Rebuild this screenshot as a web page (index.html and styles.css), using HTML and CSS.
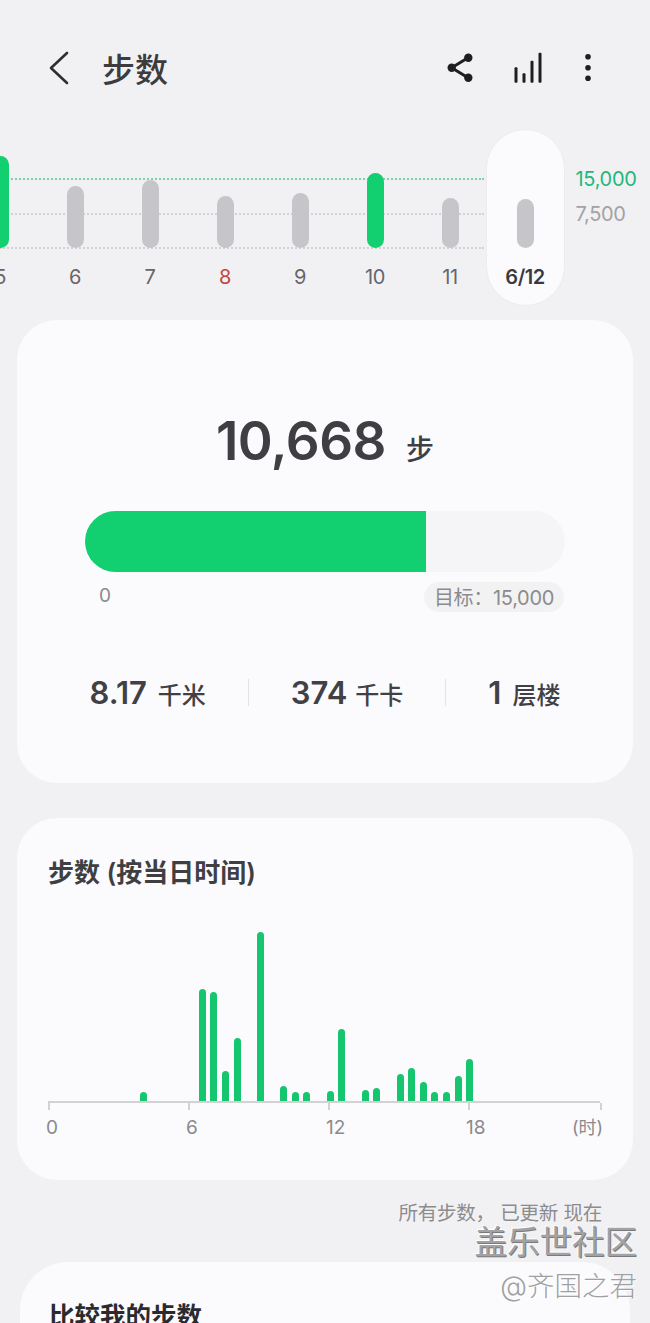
FILE: index.html
```html
<!DOCTYPE html>
<html lang="zh-CN">
<head>
<meta charset="utf-8">
<title>步数</title>
<link rel="stylesheet" href="styles.css">
</head>
<body>
<div class="page">
  <header class="topbar">
    <svg class="back" width="24" height="36" viewBox="0 0 24 36"><path d="M19 3 L3 18 L19 33" /></svg>
    <h1 class="title">步数</h1>
    <div class="actions">
      <svg class="ico" width="30" height="34" viewBox="0 0 30 34"><path class="share-line" d="M21 6.7 L4.7 16.7 L21 26.7"/><circle cx="4.7" cy="16.7" r="4.2"/><circle cx="21.3" cy="6.7" r="4.2"/><circle cx="21.3" cy="26.7" r="4.2"/></svg>
      <svg class="ico" width="30" height="34" viewBox="0 0 30 34"><rect x="1.5" y="16.3" width="3" height="15.4" rx="1"/><rect x="9.5" y="22.3" width="3" height="9.4" rx="1"/><rect x="17.5" y="9.7" width="3" height="22" rx="1"/><rect x="25.5" y="1.7" width="3" height="30" rx="1"/></svg>
      <svg class="ico" width="8" height="34" viewBox="0 0 8 34"><circle cx="4" cy="5.7" r="2.8"/><circle cx="4" cy="16.7" r="2.8"/><circle cx="4" cy="27.3" r="2.8"/></svg>
    </div>
  </header>

  <section class="trend">
    <div class="gridlines">
      <div class="gridline goal"></div>
      <div class="gridline"></div>
      <div class="gridline"></div>
    </div>
    <div class="days">
      <div class="day"><div class="plot"><div class="bar on" style="height:92px"></div></div><span class="day-label">5</span></div>
      <div class="day"><div class="plot"><div class="bar" style="height:62px"></div></div><span class="day-label">6</span></div>
      <div class="day"><div class="plot"><div class="bar" style="height:68px"></div></div><span class="day-label">7</span></div>
      <div class="day"><div class="plot"><div class="bar" style="height:52px"></div></div><span class="day-label sun">8</span></div>
      <div class="day"><div class="plot"><div class="bar" style="height:55px"></div></div><span class="day-label">9</span></div>
      <div class="day"><div class="plot"><div class="bar on" style="height:75px"></div></div><span class="day-label">10</span></div>
      <div class="day"><div class="plot"><div class="bar" style="height:50px"></div></div><span class="day-label">11</span></div>
      <div class="day today"><div class="plot"><div class="bar" style="height:49px"></div></div><span class="day-label">6/12</span></div>
    </div>
    <div class="scale">
      <span class="scale-goal">15,000</span>
      <span class="scale-mid">7,500</span>
    </div>
  </section>

  <section class="card summary">
    <div class="total"><span class="total-num">10,668</span><span class="total-unit">步</span></div>
    <div class="progress"><div class="progress-fill" style="width:341px"></div></div>
    <div class="progress-notes">
      <span class="zero">0</span>
      <span class="goal-pill">目标：15,000</span>
    </div>
    <div class="stats">
      <div class="stat"><b>8.17</b><span>千米</span></div>
      <i class="divider"></i>
      <div class="stat mid"><b>374</b><span>千卡</span></div>
      <i class="divider"></i>
      <div class="stat"><b>1</b><span>层楼</span></div>
    </div>
  </section>

  <section class="card hourly">
    <h2 class="card-title">步数 (按当日时间)</h2>
    <div class="hours">
      <i></i><i></i><i></i><i></i><i></i><i></i><i></i><i></i>
      <i style="height:9px"></i>
      <i></i><i></i><i></i><i></i>
      <i style="height:112px"></i><i style="height:109px"></i><i style="height:30px"></i><i style="height:63px"></i>
      <i></i>
      <i style="height:169px"></i>
      <i></i>
      <i style="height:15px"></i><i style="height:9px"></i><i style="height:9px"></i>
      <i></i>
      <i style="height:10px"></i><i style="height:72px"></i>
      <i></i>
      <i style="height:11px"></i><i style="height:13px"></i>
      <i></i>
      <i style="height:27px"></i><i style="height:33px"></i><i style="height:19px"></i><i style="height:9px"></i><i style="height:9px"></i><i style="height:25px"></i><i style="height:42px"></i>
      <i></i><i></i><i></i><i></i><i></i><i></i><i></i><i></i><i></i><i></i><i></i>
    </div>
    <div class="axis">
      <span class="tick"></span><span class="tick"></span><span class="tick"></span><span class="tick"></span><span class="tick last"></span>
    </div>
    <div class="axis-labels">
      <span>0</span><span>6</span><span>12</span><span>18</span><span class="unit">(时)</span>
    </div>
  </section>

  <p class="updated">所有步数， 已更新 现在</p>

  <section class="card compare">
    <h2 class="card-title dark">比较我的步数</h2>
  </section>

  <div class="watermark">
    <div class="wm-main">盖乐世社区</div>
    <div class="wm-sub">@齐国之君</div>
  </div>
</div>
</body>
</html>
```

FILE: styles.css
```css
* { box-sizing: border-box; }
html, body { margin: 0; padding: 0; }
body {
  background: #f1f1f4;
  font-family: Inter, "Noto Sans CJK SC", sans-serif;
  color: #3a3a3d;
}
.page {
  position: relative;
  width: 650px;
  height: 1323px;
  overflow: hidden;
}

/* Header */
.topbar {
  display: flex;
  align-items: center;
  height: 34px;
  margin-top: 51px;
  padding: 0 0 0 48px;
}
.back { fill: none; stroke: #2f2f31; stroke-width: 2.6; flex: none; }
.back path { stroke-linecap: round; stroke-linejoin: round; }
.title {
  margin: 4px 0 0 30px;
  font-size: 33px;
  font-weight: 500;
  line-height: 34px;
  color: #3c3c3e;
}
.actions {
  display: flex;
  align-items: center;
  margin-left: auto;
  margin-right: 58px;
  gap: 36px;
}
.ico { fill: #1f1f21; flex: none; display: block; }
.actions .ico:nth-child(1) { margin-right: 0; }
.actions .ico:nth-child(2) { margin-right: 5px; }
.share-line { fill: none; stroke: #1f1f21; stroke-width: 3; }

/* Daily trend */
.trend {
  position: relative;
  display: flex;
  height: 177px;
  margin-top: 44px;
}
.gridlines {
  position: absolute;
  left: 0;
  top: 49px;
  width: 484px;
  height: 71px;
  display: flex;
  flex-direction: column;
  justify-content: space-between;
}
.gridline { border-top: 2px dotted #d2d2d6; height: 0; }
.gridline.goal { border-top-color: #7fd0a6; }
.days {
  position: relative;
  display: flex;
  margin-left: -37.5px;
  flex: none;
}
.day {
  width: 75px;
  display: flex;
  flex-direction: column;
  align-items: center;
}
.plot {
  height: 119px;
  display: flex;
  align-items: flex-end;
}
.bar {
  width: 17px;
  border-radius: 9px;
  background: #c6c6ca;
}
.bar.on { background: #12cf6f; }
.day-label {
  margin-top: 17px;
  font-size: 20px;
  line-height: 24px;
  color: #66666a;
  letter-spacing: -0.5px;
}
.day-label.sun { color: #c2483f; }
.today {
  width: 79px;
  margin-left: -2px;
  background: #fbfbfd;
  border: 1px solid #ececef;
  border-radius: 40px;
}
.today .plot { height: 118px; }
.today .day-label { color: #3a3a3d; font-weight: 600; }
.scale {
  display: flex;
  flex-direction: column;
  margin-left: 11px;
  padding-top: 38px;
  font-size: 20px;
  line-height: 24px;
  letter-spacing: -0.3px;
  gap: 11px;
}
.scale-goal { color: #1eb87b; }
.scale-mid { color: #a2a2a5; }

/* Cards */
.card {
  background: #fbfbfd;
  border-radius: 40px;
  margin: 0 17px;
}
.summary {
  height: 463px;
  margin-top: 14px;
  padding: 84px 68px 0;
}
.total {
  display: flex;
  align-items: baseline;
  justify-content: center;
  gap: 20px;
  height: 74px;
}
.total-num {
  font-size: 53px;
  font-weight: 600;
  line-height: 74px;
  letter-spacing: -0.5px;
  color: #3f3f43;
}
.total-unit { font-size: 28px; font-weight: 500; color: #3f3f43; }
.progress {
  height: 61px;
  margin-top: 33px;
  border-radius: 31px;
  background: #f5f5f7;
  overflow: hidden;
}
.progress-fill { height: 100%; background: #12cf6f; }
.progress-notes {
  display: flex;
  justify-content: space-between;
  align-items: flex-start;
  margin-top: 10px;
}
.zero {
  margin: 2px 0 0 14px;
  font-size: 19px;
  line-height: 24px;
  color: #8a8a8d;
}
.goal-pill {
  width: 140px;
  height: 30px;
  margin-right: 1px;
  border-radius: 15px;
  background: #f2f2f3;
  font-size: 20px;
  line-height: 32px;
  text-align: center;
  color: #8b8b8e;
  letter-spacing: -0.3px;
  white-space: nowrap;
}
.stats {
  display: flex;
  align-items: center;
  justify-content: center;
  gap: 42px;
  margin: 65px -20px 0 -20px;
  height: 30px;
}
.stat {
  display: flex;
  align-items: baseline;
  gap: 11px;
  white-space: nowrap;
}
.stat.mid { gap: 8px; }
.stat b { font-size: 31px; font-weight: 600; color: #414145; }
.stat span { font-size: 24px; font-weight: 500; color: #414145; }
.divider { width: 1px; height: 27px; background: #e3e3e6; flex: none; }

.hourly {
  height: 362px;
  margin-top: 35px;
  padding: 37px 0 0 32px;
  position: relative;
}
.card-title {
  margin: 0 0 0 -1px;
  font-size: 26px;
  line-height: 36px;
  font-weight: 600;
  color: #3f3f43;
}
.card-title.dark { color: #2b2b2d; }
.hours {
  display: grid;
  grid-template-columns: repeat(48, 11.65px);
  align-items: end;
  justify-items: center;
  height: 172px;
  margin: 38px 0 0 -4px;
}
.hours i {
  display: block;
  width: 7px;
  border-radius: 4px 4px 0 0;
  background: #16c66f;
}
.axis {
  display: flex;
  gap: 138px;
  width: 552px;
  height: 9px;
  margin-left: -1px;
  border-top: 2px solid #d2d2d5;
  align-items: flex-start;
}
.tick { width: 2px; height: 7px; background: #d2d2d5; flex: none; }
.tick.last { margin-left: -8px; }
.axis-labels {
  display: flex;
  width: 554px;
  margin-top: 7px;
  margin-left: -3px;
  font-size: 19px;
  line-height: 22px;
  color: #8a8a8d;
}
.axis-labels span { flex: none; width: 140px; }
.axis-labels .unit { width: auto; margin-left: -34px; font-size: 18px; white-space: nowrap; }

.updated {
  margin: 21px 48px 0 0;
  font-size: 19.5px;
  line-height: 24px;
  text-align: right;
  color: #8c8c8f;
  letter-spacing: -0.2px;
}
.compare {
  height: 120px;
  margin: 37px 20px 0;
  border-radius: 48px;
  padding: 36px 0 0 30px;
}
.compare .card-title { font-size: 25.5px; }

/* Watermark */
.watermark {
  position: absolute;
  right: 13px;
  top: 1226px;
  text-align: right;
}
.wm-main {
  font-size: 32.5px;
  line-height: 34px;
  font-weight: 400;
  color: #a2a2a4;
  text-shadow: 1px 1px 0 #7b7b7d, -1px -1px 0 #fff;
}
.wm-sub {
  margin-top: 8px;
  font-size: 27.5px;
  line-height: 36px;
  font-weight: 300;
  color: #a0a0a2;
  text-shadow: 1px 1px 0 #fff;
}
```
